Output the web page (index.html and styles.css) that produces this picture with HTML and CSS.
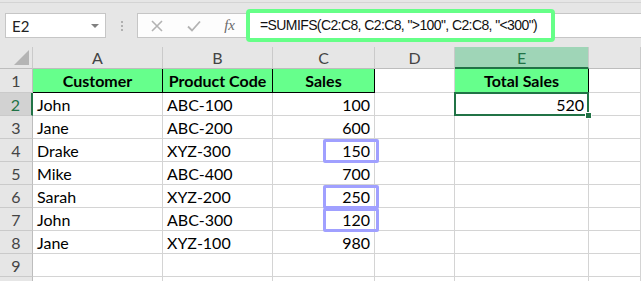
FILE: index.html
```html
<!DOCTYPE html>
<html lang="en">

<head>
    <meta charset="UTF-8">
    <title>SUMIFS</title>
    <link rel="stylesheet" href="styles.css">
</head>

<body>
    <!-- 公式栏 -->
    <div class="formula-bar">
        <div class="name-box">
            <span>E2</span>
            <span class="caret"></span>
        </div>
        <div class="grip"><i></i><i></i><i></i></div>
        <div class="fx-btns">
            <svg width="14" height="14" viewBox="0 0 14 14"><path d="M2 2L12 12M12 2L2 12" stroke="#b3b3b3" stroke-width="1.6" fill="none"/></svg>
            <svg width="16" height="14" viewBox="0 0 16 14"><path d="M2 7.5L6 11.5L14 2.5" stroke="#b3b3b3" stroke-width="1.8" fill="none"/></svg>
            <span class="fx">fx</span>
        </div>
        <div class="formula">
            <span class="hl">=SUMIFS(C2:C8, C2:C8, "&gt;100", C2:C8, "&lt;300")</span>
        </div>
    </div>

    <!-- 表格 -->
    <div class="sheet">
        <div class="hd corner"><span class="tri"></span></div>
        <div class="hd">A</div>
        <div class="hd">B</div>
        <div class="hd">C</div>
        <div class="hd">D</div>
        <div class="hd sel">E</div>
        <div class="hd"></div>

        <div class="rh">1</div>
        <div class="c th">Customer</div>
        <div class="c th">Product Code</div>
        <div class="c th">Sales</div>
        <div class="c"></div>
        <div class="c th">Total Sales</div>
        <div class="c"></div>

        <div class="rh sel">2</div>
        <div class="c">John</div>
        <div class="c">ABC-100</div>
        <div class="c num">100</div>
        <div class="c"></div>
        <div class="c num active">520</div>
        <div class="c"></div>

        <div class="rh">3</div>
        <div class="c">Jane</div>
        <div class="c">ABC-200</div>
        <div class="c num">600</div>
        <div class="c"></div>
        <div class="c"></div>
        <div class="c"></div>

        <div class="rh">4</div>
        <div class="c">Drake</div>
        <div class="c">XYZ-300</div>
        <div class="c num mark">150</div>
        <div class="c"></div>
        <div class="c"></div>
        <div class="c"></div>

        <div class="rh">5</div>
        <div class="c">Mike</div>
        <div class="c">ABC-400</div>
        <div class="c num">700</div>
        <div class="c"></div>
        <div class="c"></div>
        <div class="c"></div>

        <div class="rh">6</div>
        <div class="c">Sarah</div>
        <div class="c">XYZ-200</div>
        <div class="c num mark">250</div>
        <div class="c"></div>
        <div class="c"></div>
        <div class="c"></div>

        <div class="rh">7</div>
        <div class="c">John</div>
        <div class="c">ABC-300</div>
        <div class="c num mark">120</div>
        <div class="c"></div>
        <div class="c"></div>
        <div class="c"></div>

        <div class="rh">8</div>
        <div class="c">Jane</div>
        <div class="c">XYZ-100</div>
        <div class="c num">980</div>
        <div class="c"></div>
        <div class="c"></div>
        <div class="c"></div>

        <div class="rh">9</div>
        <div class="c"></div>
        <div class="c"></div>
        <div class="c"></div>
        <div class="c"></div>
        <div class="c"></div>
        <div class="c"></div>

        <div class="rh"></div>
        <div class="c"></div>
        <div class="c"></div>
        <div class="c"></div>
        <div class="c"></div>
        <div class="c"></div>
        <div class="c"></div>
    </div>
</body>

</html>
```

FILE: styles.css
```css
html,
body,
div {
    padding: 0;
    margin: 0;
}

html,
body {
    height: 281px;
    overflow: hidden;
}

body {
    background-color: #e6e6e6;
    font-family: Lato, "Liberation Sans", sans-serif;
}

/* 公式栏 */

.formula-bar {
    height: 45px;
    border-top: 1px solid #d4d4d4;
    margin-top: 2px;
    display: flex;
    align-items: flex-start;
    padding-top: 10px;
    box-sizing: border-box;
}

.name-box {
    margin: 0 0 0 5px;
    width: 101px;
    height: 25px;
    box-sizing: border-box;
    border: 1px solid #c6c6c6;
    background-color: #fff;
    display: flex;
    align-items: center;
    justify-content: space-between;
    padding: 0 6px 0 6px;
    font-size: 15px;
    color: #222;
}

.name-box .caret {
    width: 0;
    height: 0;
    border-left: 4px solid transparent;
    border-right: 4px solid transparent;
    border-top: 4px solid #808080;
}

.grip {
    width: 31px;
    height: 25px;
    display: flex;
    flex-direction: column;
    align-items: center;
    justify-content: center;
    gap: 2px;
}

.grip i {
    width: 2px;
    height: 2px;
    background-color: #b0b0b0;
}

.fx-btns {
    width: 111px;
    height: 25px;
    box-sizing: border-box;
    border: 1px solid #c6c6c6;
    border-right: none;
    background-color: #fdfdfd;
    display: flex;
    align-items: center;
    justify-content: space-between;
    padding: 0 13px 0 12px;
}

.fx-btns .fx {
    font-family: "Liberation Serif", serif;
    font-style: italic;
    font-size: 15px;
    color: #6a6a6a;
}

.formula {
    flex: 1;
    height: 25px;
    box-sizing: border-box;
    border-top: 1px solid #c6c6c6;
    border-bottom: 1px solid #c6c6c6;
    background-color: #fff;
    display: flex;
    align-items: center;
}

.formula .hl {
    margin-left: -2px;
    width: 309px;
    height: 33px;
    box-sizing: border-box;
    border: 4px solid #66ff88;
    border-radius: 4px;
    background-color: #fff;
    padding-left: 10px;
    line-height: 25px;
    font-family: "Liberation Sans", sans-serif;
    font-size: 14px;
    letter-spacing: -0.6px;
    color: #111;
    white-space: nowrap;
}

/* 表格 */

.sheet {
    display: grid;
    grid-template-columns: 33px 130px 110px 102px 80px 134px 1fr;
    grid-template-rows: 22px 24px repeat(9, 23px);
    background-color: #fff;
    font-size: 16px;
}

.sheet .hd {
    background-color: #e6e6e6;
    color: #444;
    border-right: 1px solid #cacaca;
    border-bottom: 1px solid #bdbdbd;
    display: flex;
    align-items: center;
    justify-content: center;
}

.sheet .hd.sel {
    background-color: #9fd5b7;
    color: #217346;
    border-bottom: 2px solid #217346;
}

.sheet .corner {
    justify-content: flex-end;
    align-items: flex-end;
    padding: 0 3px 3px 0;
}

.sheet .corner .tri {
    width: 0;
    height: 0;
    border-left: 15px solid transparent;
    border-bottom: 15px solid #b4b4b4;
}

.sheet .rh {
    background-color: #e6e6e6;
    color: #444;
    border-right: 1px solid #bdbdbd;
    border-bottom: 1px solid #cacaca;
    display: flex;
    align-items: center;
    justify-content: center;
}

.sheet .rh.sel {
    background-color: #d2d2d2;
    color: #217346;
    border-right: 2px solid #217346;
}

.sheet .c {
    border-right: 1px solid #d4d4d4;
    border-bottom: 1px solid #d4d4d4;
    display: flex;
    align-items: center;
    padding: 0 4px;
    color: #000;
    position: relative;
}

.sheet .c.th {
    background-color: #66ff8c;
    font-weight: bold;
    justify-content: center;
    border-right: 1px solid #000;
    border-bottom: 1px solid #000;
}

.sheet .c.num {
    justify-content: flex-end;
}

/* 选中单元格 */

.sheet .c.active::after {
    content: "";
    position: absolute;
    left: -1px;
    top: -1px;
    right: -1px;
    bottom: -1px;
    border: 2px solid #217346;
}

.sheet .c.active::before {
    content: "";
    position: absolute;
    right: -4px;
    bottom: -4px;
    width: 5px;
    height: 5px;
    background-color: #217346;
    border: 1px solid #fff;
    z-index: 2;
}

/* 标记框 */

.sheet .c.mark::after {
    content: "";
    position: absolute;
    left: 50px;
    right: -5px;
    top: 0;
    bottom: -2px;
    border: 3px solid #a0a0ff;
    border-radius: 2px;
    z-index: 1;
}
```
